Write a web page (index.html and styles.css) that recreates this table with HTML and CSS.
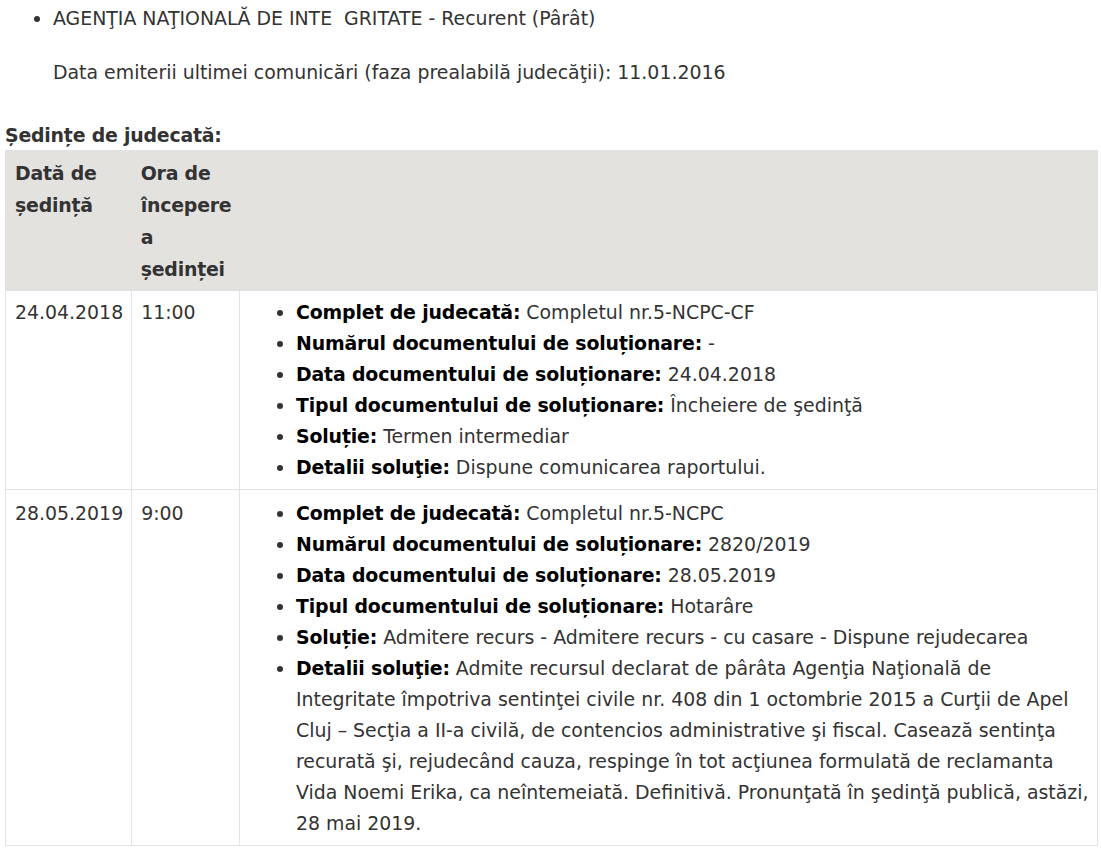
FILE: index.html
```html
<!DOCTYPE html>
<html lang="ro">
<head>
<meta charset="utf-8">
<link rel="stylesheet" href="styles.css">
</head>
<body>
<div class="page">
  <ul class="parties">
    <li>AGENŢIA NAŢIONALĂ DE INTE&nbsp; GRITATE - Recurent (Pârât)<br><br>Data emiterii ultimei comunicări (faza prealabilă judecăţii): 11.01.2016</li>
  </ul>
  <h4 class="title">Ședințe de judecată:</h4>
  <table class="hearings">
    <thead>
      <tr>
        <th class="c-date">Dată de ședință</th>
        <th class="c-time">Ora de începere a ședinței</th>
        <th></th>
      </tr>
    </thead>
    <tbody>
      <tr>
        <td>24.04.2018</td>
        <td>11:00</td>
        <td class="c-info">
          <ul class="details">
            <li><b>Complet de judecată:</b> Completul nr.5-NCPC-CF</li>
            <li><b>Numărul documentului de soluționare:</b> -</li>
            <li><b>Data documentului de soluționare:</b> 24.04.2018</li>
            <li><b>Tipul documentului de soluționare:</b> Încheiere de şedinţă</li>
            <li><b>Soluție:</b> Termen intermediar</li>
            <li><b>Detalii soluţie:</b> Dispune comunicarea raportului.</li>
          </ul>
        </td>
      </tr>
      <tr>
        <td>28.05.2019</td>
        <td>9:00</td>
        <td class="c-info">
          <ul class="details">
            <li><b>Complet de judecată:</b> Completul nr.5-NCPC</li>
            <li><b>Numărul documentului de soluționare:</b> 2820/2019</li>
            <li><b>Data documentului de soluționare:</b> 28.05.2019</li>
            <li><b>Tipul documentului de soluționare:</b> Hotarâre</li>
            <li><b>Soluție:</b> Admitere recurs - Admitere recurs - cu casare - Dispune rejudecarea</li>
            <li><b>Detalii soluţie:</b> Admite recursul declarat de pârâta Agenţia Naţională de Integritate împotriva sentinţei civile nr. 408 din 1 octombrie 2015 a Curţii de Apel Cluj – Secţia a II-a civilă, de contencios administrative şi fiscal. Casează sentinţa recurată şi, rejudecând cauza, respinge în tot acţiunea formulată de reclamanta Vida Noemi Erika, ca neîntemeiată. Definitivă. Pronunţată în şedinţă publică, astăzi, 28 mai 2019.</li>
          </ul>
        </td>
      </tr>
    </tbody>
  </table>
</div>
</body>
</html>
```

FILE: styles.css
```css
html, body {
  margin: 0;
  padding: 0;
  background: #fff;
}

.page {
  padding: 5px 3px 0 5px;
  font-family: "DejaVu Sans", Verdana, sans-serif;
  font-size: 18.9px;
  color: #333;
}

.parties {
  margin: 0;
  padding-left: 48px;
  line-height: 27px;
}

.title {
  margin: 36px 0 1px 0;
  font-size: 18.9px;
  font-weight: bold;
  line-height: 27px;
  letter-spacing: -0.2px;
  color: #333;
}

.hearings {
  width: 1093px;
  border-collapse: collapse;
  border: 1px solid #e2e2e2;
}

.hearings th {
  background: #e4e2df;
  text-align: left;
  vertical-align: top;
  font-weight: bold;
  letter-spacing: -0.2px;
  line-height: 32px;
  padding: 6px 8px 5px 9px;
}

.hearings th.c-date { width: 108px; }
.hearings th.c-time { width: 90px; }

.hearings td {
  border: 1px solid #e2e2e2;
  vertical-align: top;
  line-height: 31px;
  padding: 6px 8px 6px 9px;
}

.hearings tbody tr + tr td {
  padding-top: 8px;
}

.hearings td.c-info {
  padding-right: 2px;
}

.details {
  margin: 0;
  padding-left: 47px;
}

.details b {
  color: #000;
  letter-spacing: -0.15px;
}
```
